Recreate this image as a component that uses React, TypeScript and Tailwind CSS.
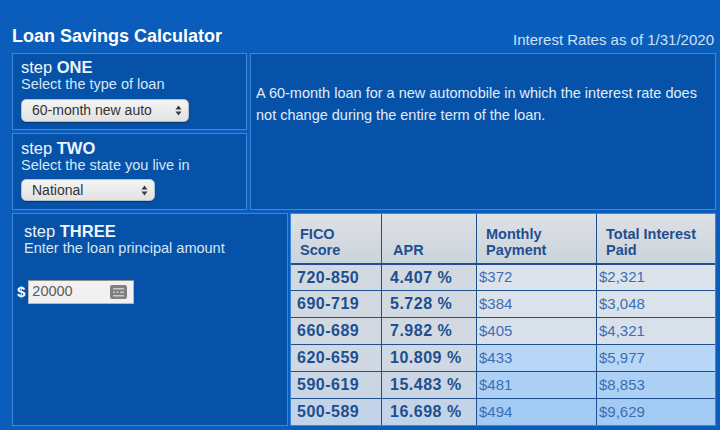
import React from 'react';

type Rate = { fico: string; apr: string; monthly: string; total: string };

const rates: Rate[] = [
  { fico: '720-850', apr: '4.407 %', monthly: '$372', total: '$2,321' },
  { fico: '690-719', apr: '5.728 %', monthly: '$384', total: '$3,048' },
  { fico: '660-689', apr: '7.982 %', monthly: '$405', total: '$4,321' },
  { fico: '620-659', apr: '10.809 %', monthly: '$433', total: '$5,977' },
  { fico: '590-619', apr: '15.483 %', monthly: '$481', total: '$8,853' },
  { fico: '500-589', apr: '16.698 %', monthly: '$494', total: '$9,629' },
];

// score/apr cells stay grey, payment cells shade toward blue for the riskier tiers
const scoreBg = ['bg-[#d3d9e0]', 'bg-[#d3d9e0]', 'bg-[#d2d9e1]', 'bg-[#cfd8e3]', 'bg-[#cad6e4]', 'bg-[#c3d3e8]'];
const payBg = ['bg-[#dde3ea]', 'bg-[#dbe2ea]', 'bg-[#d8e0ea]', 'bg-[#b8d7f6]', 'bg-[#add0f5]', 'bg-[#a4cbf3]'];

const Panel = ({ className = '', children }: { className?: string; children?: React.ReactNode }) => (
  <div className={`border border-[#3a88dc] bg-[#0552a8] ${className}`}>{children}</div>
);

const StepLabel = ({ word, hint }: { word: string; hint: string }) => (
  <>
    <div className="text-[16.5px] leading-[18px] text-[#eef4fb]">
      step <b>{word}</b>
    </div>
    <div className="text-[14.5px] leading-[16px] text-[#d9e6f6]">{hint}</div>
  </>
);

const UpDown = () => (
  <svg width="7" height="11" viewBox="0 0 7 11" className="shrink-0">
    <path d="M3.5 0.5 L6.5 4.5 H0.5 Z" fill="#3b3b3b" />
    <path d="M3.5 10.5 L6.5 6.5 H0.5 Z" fill="#3b3b3b" />
  </svg>
);

const SelectBox = ({ value, width }: { value: string; width: string }) => (
  <div
    className={`${width} flex items-center justify-between rounded-[5px] border border-[#b9bfc7] bg-gradient-to-b from-[#f4f4f4] to-[#e2e2e2] pl-[10px] pr-[6px] text-[14px] text-[#333] shadow-[0_1px_1px_rgba(0,0,0,0.35)]`}
  >
    <span>{value}</span>
    <UpDown />
  </div>
);

const KeyIcon = () => (
  <svg width="17" height="14" viewBox="0 0 17 14">
    <rect x="0" y="0" width="17" height="14" rx="2" fill="#808080" />
    <rect x="3" y="3" width="11" height="1.5" fill="#c9c9c9" />
    <rect x="3" y="6.5" width="2" height="1.5" fill="#c9c9c9" />
    <rect x="6.5" y="6.5" width="2" height="1.5" fill="#c9c9c9" />
    <rect x="10" y="6.5" width="4" height="1.5" fill="#c9c9c9" />
    <rect x="3" y="10" width="11" height="1.5" fill="#c9c9c9" />
  </svg>
);

const App = () => {
  return (
    <div className="h-[430px] w-[720px] overflow-hidden bg-[#0b5dbb] pl-3 pr-1 font-['Liberation_Sans',Arial,sans-serif]">
      <div className="flex h-[53px] items-end justify-between">
        <h1 className="mb-[7px] text-[18px] leading-[20px] font-bold text-white">Loan Savings Calculator</h1>
        <div className="mb-[4px] pr-[2px] text-[15px] leading-[18px] text-[#cfe0f5]">Interest Rates as of 1/31/2020</div>
      </div>

      <div className="flex gap-[3px]">
        <div className="flex w-[235px] shrink-0 flex-col gap-[3px]">
          <Panel className="h-[77px] pl-[8px] pt-[4px]">
            <StepLabel word="ONE" hint="Select the type of loan" />
            <div className="mt-[7px]">
              <SelectBox value="60-month new auto" width="w-[168px] h-[23px]" />
            </div>
          </Panel>
          <Panel className="h-[77px] pl-[8px] pt-[5px]">
            <StepLabel word="TWO" hint="Select the state you live in" />
            <div className="mt-[6px]">
              <SelectBox value="National" width="w-[134px] h-[22px]" />
            </div>
          </Panel>
        </div>
        <Panel className="flex-1 pl-[5px] pr-[8px] pt-[28px]">
          <p className="text-[14.5px] leading-[22px] text-[#e2ecf8]">
            A 60-month loan for a new automobile in which the interest rate does not change during the entire term of the loan.
          </p>
        </Panel>
      </div>

      <div className="mt-[3px] flex gap-[2px]">
        <Panel className="h-[213px] w-[276px] shrink-0 pt-[8px]">
          <div className="pl-[11px]">
            <StepLabel word="THREE" hint="Enter the loan principal amount" />
          </div>
          <div className="mt-[24px] flex items-center gap-[3px] pl-[4px]">
            <span className="text-[15px] font-bold text-white">$</span>
            <div className="flex h-[24px] w-[106px] items-center justify-between border border-[#b7b7b7] border-t-[#8d8d8d] bg-[#f1f1f1] pl-[3px] pr-[6px]">
              <span className="text-[14.5px] text-[#5a5a5a]">20000</span>
              <KeyIcon />
            </div>
          </div>
        </Panel>

        <div className="h-[213px] flex-1 border border-[#3a88dc] bg-[#1f4f8c]">
          <div className="grid h-full grid-cols-[90px_94px_119px_1fr] grid-rows-[49px_repeat(6,1fr)] gap-px">
            {[
              ['FICO', 'Score'],
              ['APR'],
              ['Monthly', 'Payment'],
              ['Total Interest', 'Paid'],
            ].map((lines, i) => (
              <div
                key={i}
                className={`flex flex-col justify-end bg-gradient-to-b from-[#dde1e6] to-[#ccd3db] pb-[5px] ${i === 1 ? 'pl-[11px]' : 'pl-[9px]'} text-[14.5px] leading-[16px] font-bold text-[#1f4f8e]`}
              >
                {lines.map((l) => (
                  <span key={l}>{l}</span>
                ))}
              </div>
            ))}
            {rates.map((r, i) => (
              <React.Fragment key={r.fico}>
                <div className={`${scoreBg[i]} flex items-center pl-[6px] text-[16px] tracking-[0.5px] font-bold text-[#1d4f8f] ${i === 0 ? 'border-t border-[#1f4f8c]' : ''}`}>
                  {r.fico}
                </div>
                <div className={`${scoreBg[i]} flex items-center pl-[8px] text-[16px] tracking-[0.5px] font-bold text-[#1d4f8f] ${i === 0 ? 'border-t border-[#1f4f8c]' : ''}`}>
                  {r.apr}
                </div>
                <div className={`${payBg[i]} flex items-center pl-[2px] text-[15px] text-[#3a6fb7] ${i === 0 ? 'border-t border-[#1f4f8c]' : ''}`}>
                  {r.monthly}
                </div>
                <div className={`${payBg[i]} flex items-center pl-[2px] text-[15px] text-[#3a6fb7] ${i === 0 ? 'border-t border-[#1f4f8c]' : ''}`}>
                  {r.total}
                </div>
              </React.Fragment>
            ))}
          </div>
        </div>
      </div>
    </div>
  );
};

export default App;
